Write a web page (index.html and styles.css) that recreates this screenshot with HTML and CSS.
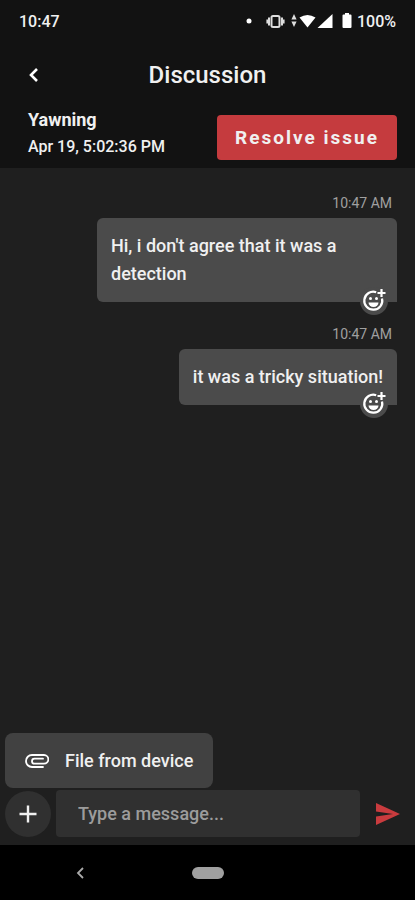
FILE: index.html
```html
<!DOCTYPE html>
<html lang="en">
<head>
<meta charset="utf-8">
<meta name="viewport" content="width=device-width, initial-scale=1">
<title>Discussion</title>
<link rel="stylesheet" href="styles.css">
</head>
<body>
<div class="app">
  <header class="header">
    <div class="status">
      <span class="clock">10:47</span>
      <div class="status-icons">
        <svg width="92" height="18" viewBox="0 0 92 18" fill="#fff" aria-hidden="true">
          <circle cx="4" cy="9" r="2.500"/>
          <g fill="none" stroke="#ddd">
            <rect x="26.500" y="4" width="8" height="11" rx="1.500" stroke-width="2"/>
            <path d="M24 5.500v8M37 5.500v8" stroke-width="2"/>
            <path d="M22.200 7.500v4M38.800 7.500v4" stroke-width="1.600"/>
          </g>
          <path d="M49 2l2.600 5.500h-5.200zM49 15l2.600-5.500h-5.200z" fill="#ddd"/>
          <path d="M54.500 5.500Q62.500 .5 70.500 5.500L62.500 15.500z"/>
          <path d="M87.500 2v14h-15z"/>
        </svg>
        <svg width="10" height="18" viewBox="0 0 10 18" fill="#fff" aria-hidden="true">
          <path d="M3 1h4v1.500h1.500a1 1 0 0 1 1 1V15a1 1 0 0 1-1 1h-7a1 1 0 0 1-1-1V3.500a1 1 0 0 1 1-1H3z"/>
        </svg>
        <span class="battery">100%</span>
      </div>
    </div>
    <div class="titlebar">
      <button class="back" type="button" aria-label="Back">
        <svg width="10" height="16" viewBox="0 0 10 16" fill="none" stroke="#fff" stroke-width="2.600"><path d="M8 2L2 8l6 6"/></svg>
      </button>
      <h1 class="title">Discussion</h1>
    </div>
    <div class="issue">
      <div class="issue-info">
        <h2 class="issue-name">Yawning</h2>
        <p class="issue-date">Apr 19, 5:02:36 PM</p>
      </div>
      <button class="resolve" type="button">Resolve issue</button>
    </div>
  </header>

  <main class="messages">
    <article class="message">
      <time class="time">10:47 AM</time>
      <div class="bubble">
        <p class="text">Hi, i don't agree that it was a detection</p>
        <button class="react" type="button" aria-label="Add reaction">
          <svg width="26" height="26" viewBox="0 0 26 26" fill="none" stroke="#fff" stroke-width="2.200">
            <path d="M15.200 4.200A9 9 0 1 0 21 10.500"/>
            <path d="M20.500 1v8M16.500 5h8"/>
            <path d="M7.500 14.500h10a5 4.500 0 0 1-10 0z" fill="#fff" stroke="none"/>
            <circle cx="9.500" cy="10.500" r="1.500" fill="#fff" stroke="none"/>
            <circle cx="15.500" cy="10.500" r="1.500" fill="#fff" stroke="none"/>
          </svg>
        </button>
      </div>
    </article>
    <article class="message">
      <time class="time">10:47 AM</time>
      <div class="bubble">
        <p class="text">it was a tricky situation!</p>
        <button class="react" type="button" aria-label="Add reaction">
          <svg width="26" height="26" viewBox="0 0 26 26" fill="none" stroke="#fff" stroke-width="2.200">
            <path d="M15.200 4.200A9 9 0 1 0 21 10.500"/>
            <path d="M20.500 1v8M16.500 5h8"/>
            <path d="M7.500 14.500h10a5 4.500 0 0 1-10 0z" fill="#fff" stroke="none"/>
            <circle cx="9.500" cy="10.500" r="1.500" fill="#fff" stroke="none"/>
            <circle cx="15.500" cy="10.500" r="1.500" fill="#fff" stroke="none"/>
          </svg>
        </button>
      </div>
    </article>
  </main>

  <footer class="footer">
    <button class="attach" type="button">
      <svg width="24" height="14" viewBox="0 0 24 14" fill="none" stroke="#fff" stroke-width="1.800" stroke-linecap="round" aria-hidden="true">
        <path d="M18 13H7A6 6 0 0 1 7 1h12a4.200 4.200 0 0 1 0 8.700H9.500a2.500 2.500 0 0 1 0-5H18"/>
      </svg>
      <span>File from device</span>
    </button>
    <form class="composer">
      <button class="add" type="button" aria-label="Add attachment">
        <svg width="18" height="18" viewBox="0 0 18 18" fill="none" stroke="#f0f0f0" stroke-width="2.400"><path d="M9 .5v17M.5 9h17"/></svg>
      </button>
      <input class="input" type="text" placeholder="Type a message..." aria-label="Message">
      <button class="send" type="button" aria-label="Send">
        <svg width="26" height="22" viewBox="0 0 26 22" fill="#c93b3e"><path d="M1 0l24 11L1 22v-8.500L18 11 1 8.500z"/></svg>
      </button>
    </form>
  </footer>

  <nav class="system-nav" aria-label="System">
    <button class="nav-back" type="button" aria-label="System back">
      <svg width="8" height="12" viewBox="0 0 8 12" fill="none" stroke="#aaa" stroke-width="1.800"><path d="M7 1L2 6l5 5"/></svg>
    </button>
    <button class="nav-home" type="button" aria-label="Home"></button>
  </nav>
</div>
</body>
</html>
```
FILE: styles.css
```css
* {
  box-sizing: border-box;
}

body {
  margin: 0;
  background: #1f1f1f;
  color: #f0f0f0;
  font-family: Roboto, "Liberation Sans", sans-serif;
  font-size: 18px;
  font-weight: 500;
}

h1, h2, p {
  margin: 0;
}

button, input {
  border: 0;
  padding: 0;
  color: inherit;
  font: inherit;
}

button {
  display: flex;
  align-items: center;
  justify-content: center;
  background: none;
  cursor: pointer;
}

svg {
  display: block;
  flex: none;
}

.app {
  display: flex;
  flex-direction: column;
  min-height: 100vh;
}

.header {
  background: #121212;
  padding-bottom: 8px;
}

.status {
  display: flex;
  align-items: center;
  justify-content: space-between;
  height: 42px;
  padding: 0 19px;
  font-size: 16px;
}

.status-icons {
  display: flex;
  align-items: center;
  gap: 5px;
}

.titlebar {
  display: grid;
  grid-template-columns: 40px 1fr 40px;
  align-items: center;
  height: 64px;
  padding: 1px 14px 0;
}

.back {
  height: 40px;
}

.title {
  font-size: 24px;
  font-weight: 500;
  line-height: 30px;
  text-align: center;
}

.issue {
  display: flex;
  align-items: flex-end;
  justify-content: space-between;
  padding: 0 18px 0 28px;
}

.issue-name {
  font-size: 18px;
  font-weight: 700;
  line-height: 28px;
}

.issue-date {
  font-size: 16px;
  line-height: 26px;
}

.resolve {
  height: 45px;
  padding: 0 18px;
  border-radius: 4px;
  background: #c53b3e;
  font-size: 19px;
  font-weight: 700;
  letter-spacing: 2px;
}

.messages {
  display: flex;
  flex: 1;
  flex-direction: column;
  gap: 23px;
  padding: 26px 18px;
}

.message {
  display: flex;
  flex-direction: column;
  align-items: flex-end;
  gap: 6px;
}

.time {
  padding-right: 5px;
  color: #a0a0a0;
  font-size: 14px;
  font-weight: 400;
  line-height: 18px;
}

.bubble {
  position: relative;
  max-width: 300px;
  padding: 14px;
  border-radius: 6px 6px 0 6px;
  background: #4b4b4b;
}

.text {
  font-size: 18px;
  line-height: 28px;
}

.react {
  position: absolute;
  right: 9px;
  bottom: -13px;
  width: 28px;
  height: 28px;
  border-radius: 50%;
  background: #4b4b4b;
}

.footer {
  display: flex;
  flex-direction: column;
  align-items: flex-start;
  gap: 2px;
  padding: 0 5px 8px;
}

.attach {
  gap: 16px;
  height: 55px;
  padding: 0 20px;
  border-radius: 8px;
  background: #414141;
}

.composer {
  display: flex;
  align-items: center;
  align-self: stretch;
  gap: 5px;
}

.add {
  flex: none;
  width: 46px;
  height: 46px;
  border-radius: 50%;
  background: #303030;
}

.input {
  flex: 1;
  min-width: 0;
  height: 47px;
  padding: 0 22px;
  border-radius: 4px;
  background: #303030;
}

.input::placeholder {
  color: #9c9c9c;
  opacity: 1;
}

.send {
  flex: none;
  width: 45px;
  height: 46px;
}

.system-nav {
  display: grid;
  grid-template-columns: 1fr 32px 1fr;
  align-items: center;
  height: 55px;
  background: #000;
}

.nav-back {
  justify-self: center;
  width: 40px;
  height: 40px;
  margin-right: 32px;
}

.nav-home {
  height: 12px;
  border-radius: 6px;
  background: #a0a0a0;
}
```
